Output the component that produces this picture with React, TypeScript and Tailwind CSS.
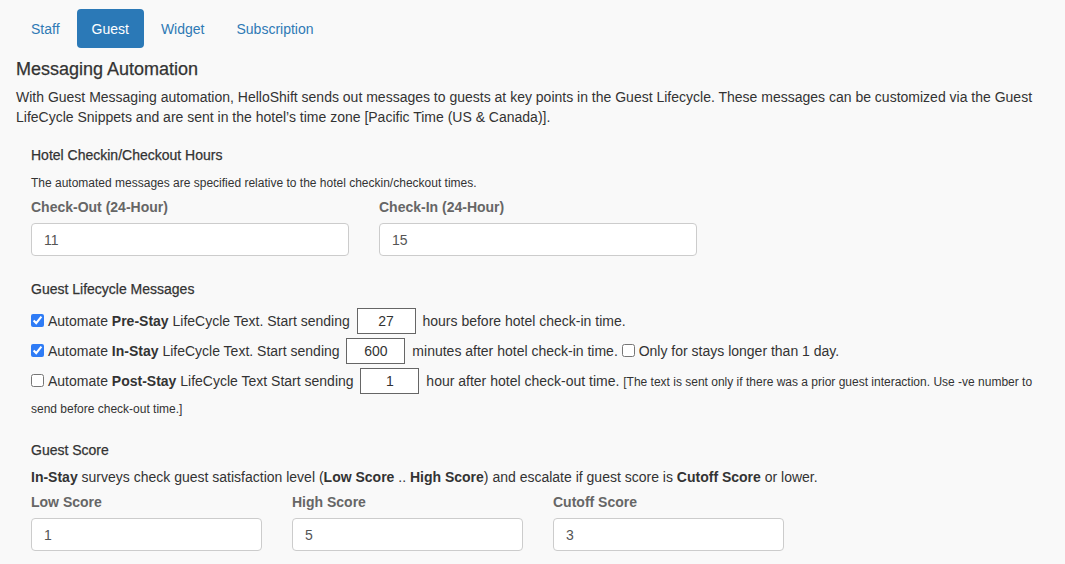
import React from 'react';

const font = { fontFamily: '"Liberation Sans", Arial, sans-serif' };

function Tabs() {
  const tabs = ['Staff', 'Guest', 'Widget', 'Subscription'];
  return (
    <ul className="flex gap-[2px] pt-[9px]">
      {tabs.map((t) => (
        <li key={t}>
          <a
            className={
              t === 'Guest'
                ? 'flex h-[39px] items-center rounded-[4px] bg-[#2b79b7] px-[15px] text-white'
                : 'flex h-[39px] items-center px-[15px] text-[#2f7ab5]'
            }
          >
            {t}
          </a>
        </li>
      ))}
    </ul>
  );
}

function Field({ label, value }: { label: string; value: string }) {
  return (
    <div>
      <label className="block font-bold leading-[20px] text-[#666]">{label}</label>
      <input
        readOnly
        value={value}
        className="mt-[6px] block h-[33px] w-full rounded-[4px] border border-[#ccc] bg-white px-[12px] text-[14px] text-[#555] outline-none"
      />
    </div>
  );
}

function SmallBox({ value }: { value: string }) {
  return (
    <input
      readOnly
      value={value}
      className="mx-[3px] inline-block h-[26px] w-[59px] border border-[#666] bg-white text-center align-top text-[14px] text-[#333] outline-none"
    />
  );
}

function Check({ checked }: { checked?: boolean }) {
  return (
    <input
      type="checkbox"
      readOnly
      checked={!!checked}
      className="mr-[4px] inline-block h-[13px] w-[13px] align-[-1px] accent-[#2f7cf6]"
    />
  );
}

export default function App() {
  const headStyle = { ...font, WebkitTextStroke: '0.25px #333' } as React.CSSProperties;
  return (
    <div className="min-h-screen bg-[#f9f9f9] px-4 text-[14px] leading-[20px] text-[#333]" style={font}>
      <Tabs />
      <h2 className="mt-[11px] text-[18px] leading-[20px]" style={headStyle}>Messaging Automation</h2>
      <p className="mt-[8px]">
        With Guest Messaging automation, HelloShift sends out messages to guests at key points in the Guest Lifecycle. These messages can be customized via the Guest
        <br />
        LifeCycle Snippets and are sent in the hotel’s time zone [Pacific Time (US &amp; Canada)].
      </p>

      <div className="pl-[15px]">
        {/* Checkin / checkout */}
        <h4 className="mt-[18px]" style={headStyle}>Hotel Checkin/Checkout Hours</h4>
        <p className="mt-[10px] text-[12px] leading-[16px]">
          The automated messages are specified relative to the hotel checkin/checkout times.
        </p>
        <div className="mt-[6px] grid grid-cols-[318px_318px] gap-x-[30px]">
          <Field label="Check-Out (24-Hour)" value="11" />
          <Field label="Check-In (24-Hour)" value="15" />
        </div>

        {/* Lifecycle */}
        <h4 className="mt-[23px]" style={headStyle}>Guest Lifecycle Messages</h4>
        <div className="mt-[7px]">
          <div className="py-[2px] leading-[26px]">
            <Check checked />Automate <b>Pre-Stay</b> LifeCycle Text. Start sending <SmallBox value="27" /> hours before hotel check-in time.
          </div>
          <div className="py-[2px] leading-[26px]">
            <Check checked />Automate <b>In-Stay</b> LifeCycle Text. Start sending <SmallBox value="600" /> minutes after hotel check-in time.{' '}
            <Check />Only for stays longer than 1 day.
          </div>
          <div className="py-[2px] leading-[26px]">
            <Check />Automate <b>Post-Stay</b> LifeCycle Text Start sending <SmallBox value="1" /> hour after hotel check-out time.{' '}
            <span className="text-[12px]">
              [The text is sent only if there was a prior guest interaction. Use -ve number to send before check-out time.]
            </span>
          </div>
        </div>

        {/* Score */}
        <h4 className="mt-[16px]" style={headStyle}>Guest Score</h4>
        <p className="mt-[7px]">
          <b>In-Stay</b> surveys check guest satisfaction level (<b>Low Score</b> .. <b>High Score</b>) and escalate if guest score is <b>Cutoff Score</b> or lower.
        </p>
        <div className="mt-[5px] grid grid-cols-[231px_231px_231px] gap-x-[30px]">
          <Field label="Low Score" value="1" />
          <Field label="High Score" value="5" />
          <Field label="Cutoff Score" value="3" />
        </div>
      </div>
    </div>
  );
}
